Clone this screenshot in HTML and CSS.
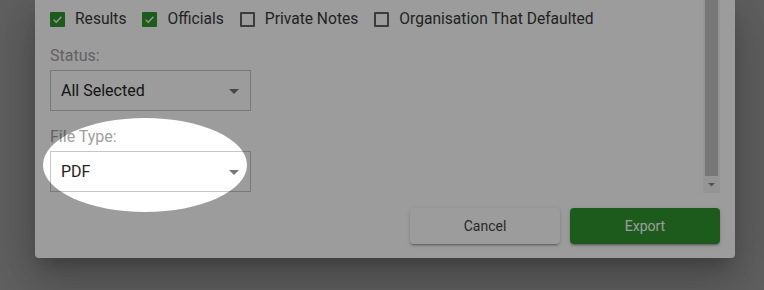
FILE: index.html
```html
<!DOCTYPE html>
<html lang="en">
<head>
<meta charset="utf-8">
<title>Export</title>
<link rel="stylesheet" href="styles.css">
</head>
<body>
<div class="dialog">
  <div class="scroll-area">
    <div class="form">
      <div class="checks">
        <label class="check"><span class="box checked"><svg viewBox="0 0 15 15" width="15" height="15"><path d="M3.6 7.6 L6.2 10.2 L11.4 4.8" fill="none" stroke="#fff" stroke-width="1.3"/></svg></span><span>Results</span></label>
        <label class="check"><span class="box checked"><svg viewBox="0 0 15 15" width="15" height="15"><path d="M3.6 7.6 L6.2 10.2 L11.4 4.8" fill="none" stroke="#fff" stroke-width="1.3"/></svg></span><span>Officials</span></label>
        <label class="check"><span class="box"></span><span>Private Notes</span></label>
        <label class="check"><span class="box"></span><span>Organisation That Defaulted</span></label>
      </div>
      <div class="field-label">Status:</div>
      <div class="select"><span>All Selected</span><svg class="caret" viewBox="0 0 24 24" width="24" height="24"><path d="M7 10l5 5 5-5z"/></svg></div>
      <div class="field-label">File Type:</div>
      <div class="select"><span>PDF</span><svg class="caret" viewBox="0 0 24 24" width="24" height="24"><path d="M7 10l5 5 5-5z"/></svg></div>
    </div>
    <div class="scrollbar">
      <div class="thumb"></div>
      <div class="arrow"><svg viewBox="0 0 17 17" width="17" height="17"><path d="M5 7 L12 7 L8.5 10.5 Z"/></svg></div>
    </div>
  </div>
  <div class="actions">
    <button class="btn cancel">Cancel</button>
    <button class="btn export">Export</button>
  </div>
</div>
<div class="spotlight"></div>
</body>
</html>
```

FILE: styles.css
```css
html, body {
  margin: 0;
  padding: 0;
}
body {
  background: #9c9c9c;
  font-family: Roboto, "Liberation Sans", sans-serif;
  height: 100vh;
  overflow: hidden;
  position: relative;
}
.dialog {
  margin-left: 35px;
  width: 700px;
  background: #fff;
  border-radius: 0 0 4px 4px;
  box-shadow: 0 11px 15px -7px rgba(0,0,0,.2), 0 24px 38px 3px rgba(0,0,0,.14), 0 9px 46px 8px rgba(0,0,0,.12);
}
.scroll-area {
  display: flex;
  height: 193px;
  padding: 0 15px;
}
.form {
  flex: 1;
  padding-top: 9px;
}
.checks {
  display: flex;
  align-items: center;
  gap: 16px;
  height: 20px;
  font-size: 15.6px;
  line-height: 20px;
  color: #383838;
}
.check {
  display: flex;
  align-items: center;
  gap: 10px;
}
.box {
  width: 15px;
  height: 15px;
  box-sizing: border-box;
  border: 2px solid #636363;
  border-radius: 1px;
  display: flex;
}
.box.checked {
  border: none;
  background: #309530;
}
.field-label {
  font-size: 16px;
  line-height: 20px;
  color: #a0a0a0;
  margin-top: 17px;
  margin-bottom: 4px;
}
.select + .field-label {
  margin-top: 16px;
}
.select {
  width: 201px;
  height: 41px;
  box-sizing: border-box;
  border: 1px solid #c6c6c6;
  display: flex;
  align-items: center;
  justify-content: space-between;
  padding: 0 4px 0 10px;
  font-size: 16px;
  color: #232323;
}
.caret {
  fill: #777;
  margin-top: 1px;
}
.scrollbar {
  width: 17px;
  background: #f3f3f3;
  display: flex;
  flex-direction: column;
}
.thumb {
  flex: 1;
  margin: 0 2px;
  background: #c3c3c3;
}
.arrow {
  height: 17px;
}
.arrow svg {
  display: block;
  fill: #8a8a8a;
}
.actions {
  display: flex;
  justify-content: flex-end;
  gap: 10px;
  padding: 15px 15px 14px;
}
.btn {
  width: 150px;
  height: 36px;
  border: none;
  border-radius: 4px;
  font-family: Roboto, "Liberation Sans", sans-serif;
  font-size: 14px;
  line-height: 34px;
  padding: 0;
  box-shadow: 0 3px 1px -2px rgba(0,0,0,.2), 0 2px 2px 0 rgba(0,0,0,.14), 0 1px 5px 0 rgba(0,0,0,.12);
}
.cancel {
  background: #fff;
  color: #444;
}
.export {
  background: #309530;
  color: #fff;
}
.spotlight {
  position: absolute;
  left: 43px;
  top: 118px;
  width: 204px;
  height: 94px;
  border-radius: 50%;
  box-shadow: 0 0 0 2000px rgba(0,0,0,.39);
  z-index: 10;
}
```
